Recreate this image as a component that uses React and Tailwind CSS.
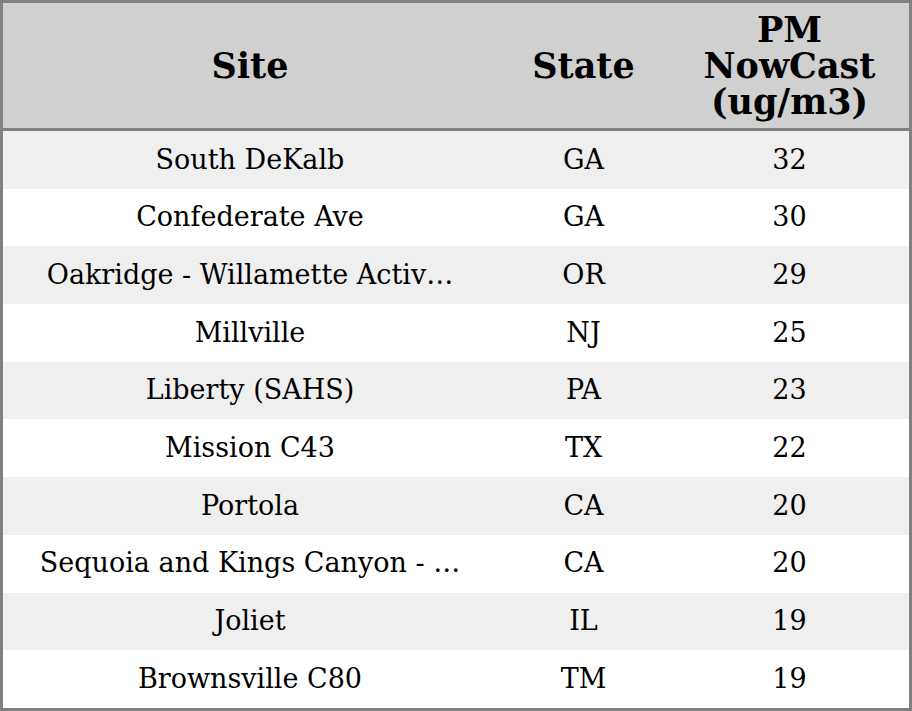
import React from "react";

const rows = [
  ["South DeKalb", "GA", "32"],
  ["Confederate Ave", "GA", "30"],
  ["Oakridge - Willamette Activ…", "OR", "29"],
  ["Millville", "NJ", "25"],
  ["Liberty (SAHS)", "PA", "23"],
  ["Mission C43", "TX", "22"],
  ["Portola", "CA", "20"],
  ["Sequoia and Kings Canyon - …", "CA", "20"],
  ["Joliet", "IL", "19"],
  ["Brownsville C80", "TM", "19"],
];

export default function App() {
  return (
    <div
      className="w-[912px] h-[711px] bg-white border-[3px] border-[#808080] flex flex-col text-black"
      style={{ fontFamily: '"DejaVu Serif", serif' }}
    >
      <div className="h-[125px] bg-[#d0d0d0] flex items-center font-bold text-[35px] leading-[36px] border-b-[3px] border-[#808080] box-content">
        <div className="w-[494px] text-center">Site</div>
        <div className="w-[173px] text-center">State</div>
        <div className="w-[239px] text-center">
          PM
          <br />
          NowCast
          <br />
          (ug/m3)
        </div>
      </div>
      {rows.map((r, i) => (
        <div
          key={i}
          className={`h-[57.7px] flex items-center text-[27px] ${i % 2 === 0 ? "bg-[#efefef]" : "bg-white"}`}
        >
          <div className="w-[494px] text-center whitespace-nowrap">{r[0]}</div>
          <div className="w-[173px] text-center">{r[1]}</div>
          <div className="w-[239px] text-center">{r[2]}</div>
        </div>
      ))}
    </div>
  );
}
